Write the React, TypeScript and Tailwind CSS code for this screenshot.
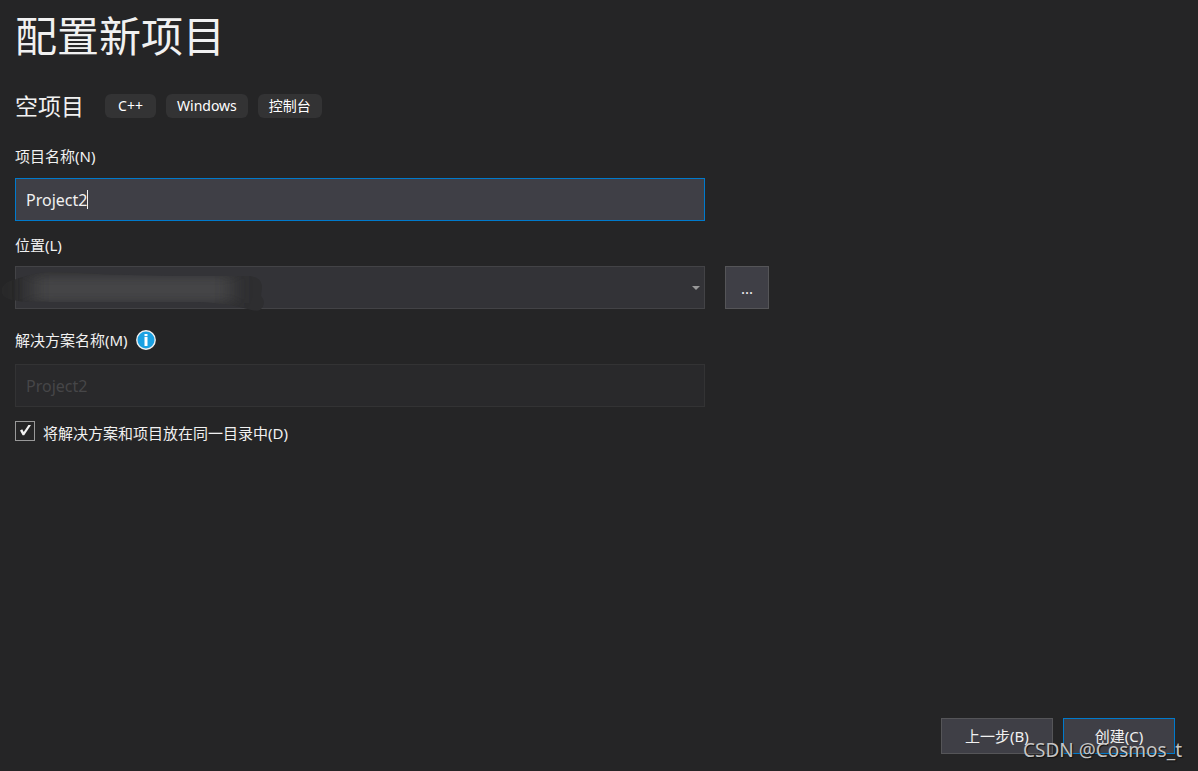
import React, { useState } from 'react';

const tags = ['C++', 'Windows', '控制台'];

const InfoIcon: React.FC = () => (
  <svg className="h-5 w-5" viewBox="0 0 20 20" aria-hidden="true">
    <circle cx="10" cy="10" r="9.2" fill="#1ba1e2" stroke="#f1f1f1" strokeWidth="1.4" />
    <rect x="8.5" y="4" width="3" height="2.2" fill="#fff" />
    <rect x="8.5" y="7" width="3" height="9" fill="#fff" />
  </svg>
);

const PathSmudge: React.FC = () => (
  <svg
    className="pointer-events-none absolute top-0 -left-[15px] h-[50px] w-[285px]"
    viewBox="0 0 285 50"
    aria-hidden="true"
  >
    <defs>
      <clipPath id="smudgeShape">
        <path d="M2 25C2 19 7 16 14 14C24 10 36 7 50 6C75 6 100 9 130 9C160 10 190 10 215 10L250 10C258 11 262 15 262 22L261 30C265 34 265 40 260 44C255 46 248 43 240 41C225 38 210 36 190 36L50 36C35 35 25 37 14 34C7 33 2 30 2 25Z" />
      </clipPath>
      <filter id="smudgeBlur" x="-20%" y="-100%" width="140%" height="300%">
        <feGaussianBlur stdDeviation="10 6" />
      </filter>
    </defs>
    <g clipPath="url(#smudgeShape)">
      <rect width="285" height="50" fill="#2e2e30" />
      <rect width="24" height="50" x="-6" fill="#262626" filter="url(#smudgeBlur)" />
      <rect width="200" height="28" x="32" y="9" fill="#454546" filter="url(#smudgeBlur)" />
    </g>
  </svg>
);

const App: React.FC = () => {
  const [name, setName] = useState('Project2');
  const [sameFolder, setSameFolder] = useState(true);

  return (
    <div className="flex min-h-screen flex-col bg-[#252526] font-['Noto_Sans','Noto_Sans_CJK_SC',sans-serif] text-[15px] leading-5 text-[#f1f1f1]">
      <main className="flex-1 px-[15px] pt-2">
        <h1 className="text-[42px] leading-[56px]">配置新项目</h1>

        <div className="mt-[30px] flex h-6 items-center">
          <h2 className="mr-[21px] text-[23px] leading-6">空项目</h2>
          <ul className="flex gap-[10px] text-center text-sm leading-6 text-white">
            {tags.map((tag) => (
              <li key={tag} className="min-w-[51px] rounded-md bg-[#333334] px-[11px]">
                {tag}
              </li>
            ))}
          </ul>
        </div>

        <label htmlFor="name" className="mt-7 block w-fit">
          项目名称(N)
        </label>
        <div className="mt-3 flex h-[43px] w-[690px] max-w-full items-center border border-[#007acc] bg-[#3f3f46] px-[10px]">
          <input
            id="name"
            type="text"
            value={name}
            onChange={(e) => setName(e.target.value)}
            className="field-sizing-content text-base outline-none"
          />
          <span className="h-[19px] w-px bg-[#f1f1f1]" />
        </div>

        <label htmlFor="location" className="mt-[14px] block w-fit">
          位置(L)
        </label>
        <div className="mt-[11px] flex gap-5">
          <div className="relative w-[690px]">
            <select
              id="location"
              className="h-[43px] w-full appearance-none border border-[#434346] bg-[#333337] px-[10px] outline-none"
            >
              <option value=""></option>
            </select>
            <PathSmudge />
            <svg
              className="pointer-events-none absolute top-5 right-[5px] h-1 w-2"
              viewBox="0 0 8 4"
              aria-hidden="true"
            >
              <path d="M0 0H8L4 4Z" fill="#999" />
            </svg>
          </div>
          <button type="button" className="h-[43px] w-11 border border-[#555558] bg-[#3f3f46]">
            ...
          </button>
        </div>

        <div className="mt-[21px] flex items-center gap-2">
          <label htmlFor="solution">解决方案名称(M)</label>
          <InfoIcon />
        </div>
        <input
          id="solution"
          type="text"
          value={name}
          disabled
          className="mt-[14px] block h-[43px] w-[690px] max-w-full border border-[#333334] bg-[#29292b] px-[10px] text-base text-[#464648]"
        />

        <label className="mt-[14px] flex w-fit gap-2">
          <span className="relative h-5 w-5">
            <input
              type="checkbox"
              checked={sameFolder}
              onChange={(e) => setSameFolder(e.target.checked)}
              className="block h-5 w-5 appearance-none border border-[#999] bg-[#252526]"
            />
            {sameFolder && (
              <svg
                className="pointer-events-none absolute inset-0 h-5 w-5"
                viewBox="0 0 20 20"
                aria-hidden="true"
              >
                <path d="M5 9.4L7.2 8.2L8.7 10.9L13.4 4H16L9.2 14.2H7.6Z" fill="#f1f1f1" />
              </svg>
            )}
          </span>
          <span className="pt-0.5">将解决方案和项目放在同一目录中(D)</span>
        </label>
      </main>

      <footer className="relative flex justify-end gap-[10px] pr-[23px] pb-[17px]">
        <button type="button" className="h-9 w-28 border border-[#555558] bg-[#3f3f46]">
          上一步(B)
        </button>
        <button type="button" className="h-9 w-28 border border-[#007acc] bg-[#3f3f46]">
          创建(C)
        </button>
        <span className="pointer-events-none absolute right-4 bottom-[9px] text-[19px] leading-6 text-[#c4c4c4] [text-shadow:1px_1px_1px_#111]">
          CSDN @Cosmos_t
        </span>
      </footer>
    </div>
  );
};

export default App;
